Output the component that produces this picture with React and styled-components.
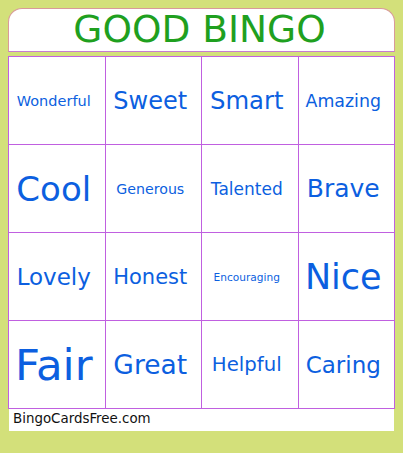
import React from "react";
import styled, { createGlobalStyle } from "styled-components";

const GlobalStyle = createGlobalStyle`
  html, body {
    margin: 0;
    padding: 0;
    background: #d3e07a;
  }
  body {
    font-family: "DejaVu Sans", Verdana, sans-serif;
  }
`;

const Page = styled.div`
  width: 403px;
  height: 453px;
  padding: 8px;
  box-sizing: border-box;
  background: #d3e07a;
`;

const Header = styled.div`
  width: 387px;
  height: 44px;
  box-sizing: border-box;
  background: #fff;
  border: 1px solid #d99a9a;
  border-bottom-color: #c87ad0;
  border-radius: 14px 14px 0 0;
  display: flex;
  align-items: center;
  justify-content: center;
  padding-right: 4px;
  color: #1fa01f;
  font-size: 37.5px;
  line-height: 1;
`;

const Grid = styled.div`
  margin-top: 4px;
  width: 387px;
  box-sizing: border-box;
  display: grid;
  grid-template-columns: repeat(4, 1fr);
  grid-auto-rows: 88px;
  border-top: 1px solid #c060e0;
  border-left: 1px solid #c060e0;
  background: #fff;
`;

const Cell = styled.div`
  border-right: 1px solid #c060e0;
  border-bottom: 1px solid #c060e0;
  display: flex;
  align-items: center;
  justify-content: center;
  padding-right: 6px;
  color: #0c5fe0;
  font-size: ${(p) => p.size}px;
  white-space: nowrap;
`;

const Footer = styled.div`
  width: 385px;
  height: 22px;
  margin-left: 1px;
  background: #fff;
  color: #111;
  font-size: 13.4px;
  display: flex;
  align-items: center;
  padding-left: 4px;
  padding-bottom: 3px;
  box-sizing: border-box;
`;

const words = [
  ["Wonderful", 14.5],
  ["Sweet", 24],
  ["Smart", 24.3],
  ["Amazing", 17.4],
  ["Cool", 34],
  ["Generous", 14.2],
  ["Talented", 17],
  ["Brave", 25],
  ["Lovely", 23],
  ["Honest", 21],
  ["Encouraging", 10.6],
  ["Nice", 35],
  ["Fair", 43.5],
  ["Great", 26.5],
  ["Helpful", 19.7],
  ["Caring", 23],
];

export default function App() {
  return (
    <Page>
      <GlobalStyle />
      <Header>GOOD BINGO</Header>
      <Grid>
        {words.map(([w, s]) => (
          <Cell key={w} size={s}>
            {w}
          </Cell>
        ))}
      </Grid>
      <Footer>BingoCardsFree.com</Footer>
    </Page>
  );
}
